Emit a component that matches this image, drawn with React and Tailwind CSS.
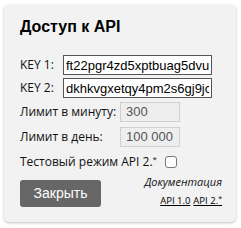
import React, { useState } from 'react';

const App = () => {
    const [testMode, setTestMode] = useState(false);

    return (
        <div className="min-h-screen bg-white p-[4px] pt-[5px]" style={{ fontFamily: '"Open Sans", sans-serif' }}>
            <div className="w-[232px] h-[217px] bg-[#f2f2f2] rounded-[5px] shadow-[0_1px_3px_rgba(0,0,0,0.25)] px-[16px] pt-[12px] text-[#111]">
                <h1 className="text-[16px] font-bold leading-[20px] font-['Liberation_Sans',sans-serif] text-black">Доступ к API</h1>

                <div className="mt-[18px] flex items-center h-[20px]">
                    <span className="w-[43px] text-[12px]">KEY 1:</span>
                    <input
                        readOnly
                        value="ft22pgr4zd5xptbuag5dvu"
                        className="w-[149px] h-[20px] border border-[#555] bg-white px-[2px] text-[13px] text-black outline-none font-['Liberation_Sans',sans-serif]"
                    />
                </div>
                <div className="mt-[3px] flex items-center h-[20px]">
                    <span className="w-[43px] text-[12px]">KEY 2:</span>
                    <input
                        readOnly
                        value="dkhkvgxetqy4pm2s6gj9jc"
                        className="w-[149px] h-[20px] border border-[#555] bg-white px-[2px] text-[13px] text-black outline-none font-['Liberation_Sans',sans-serif]"
                    />
                </div>

                <div className="mt-[3px] flex items-center h-[21px]">
                    <span className="w-[100px] text-[12px]">Лимит в минуту:</span>
                    <div className="w-[60px] h-[20px] border border-[#d0d0d0] bg-[#eeeeee] px-[5px] text-[13px] leading-[18px] text-[#555] whitespace-nowrap font-['Liberation_Sans',sans-serif]">300</div>
                </div>
                <div className="mt-[4px] flex items-center h-[21px]">
                    <span className="w-[100px] text-[12px]">Лимит в день:</span>
                    <div className="w-[60px] h-[20px] border border-[#d0d0d0] bg-[#eeeeee] px-[5px] text-[13px] leading-[18px] text-[#555] whitespace-nowrap font-['Liberation_Sans',sans-serif]">100 000</div>
                </div>

                <div className="mt-[5px] flex items-center h-[20px]">
                    <span className="text-[12px] whitespace-nowrap">
                        Тестовый режим API 2.<span className="relative top-[-4px] text-[8px]">*</span>
                    </span>
                    <button
                        onClick={() => setTestMode(!testMode)}
                        className="ml-[8px] w-[12px] h-[12px] border border-[#777] rounded-[3px] bg-white shrink-0"
                    >
                        {testMode && <span className="block w-full h-full bg-[#666]" />}
                    </button>
                </div>

                <div className="flex items-start justify-between mr-[-2px]">
                    <button className="mt-[8px] w-[81px] h-[27px] bg-[#666] rounded-[3px] text-white text-[14px] font-['Liberation_Sans',sans-serif]">
                        Закрыть
                    </button>
                    <div className="flex flex-col items-end pt-[2px]">
                        <span className="text-[11px] italic leading-[16px]">Документация</span>
                        <div className="mt-[5px] text-[9.5px] leading-[12px] flex gap-[3px]">
                            <a href="#" className="underline text-black">API 1.0</a>
                            <a href="#" className="underline text-black">
                                API 2.<span className="relative top-[-3px] text-[7px]">*</span>
                            </a>
                        </div>
                    </div>
                </div>
            </div>
        </div>
    );
};

export default App;
